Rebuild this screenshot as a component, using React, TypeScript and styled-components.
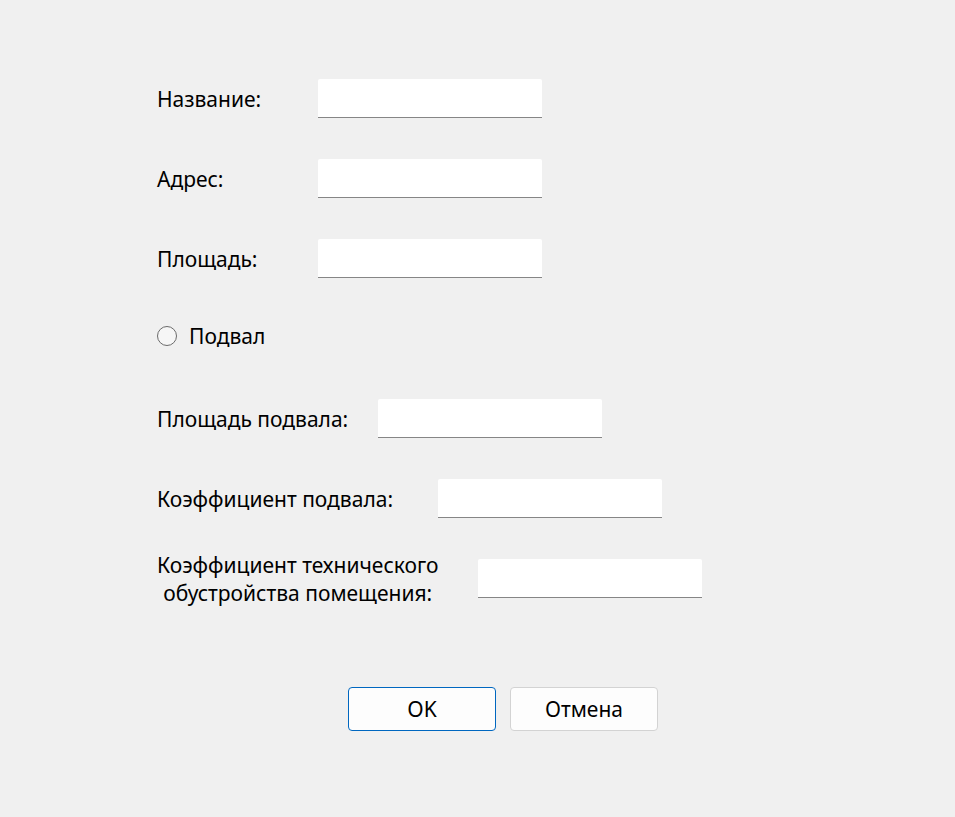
import React from "react";
import styled, { createGlobalStyle } from "styled-components";

const Global = createGlobalStyle`
  html, body { margin: 0; padding: 0; background: #f0f0f0; }
  body { font-family: "Noto Sans", "Open Sans", sans-serif; color: #000; }
`;

const Window = styled.div`
  width: 955px;
  height: 817px;
  box-sizing: border-box;
  padding: 78px 0 0 157px;
  background: #f0f0f0;
  display: flex;
  flex-direction: column;
`;

const Form = styled.div`
  display: flex;
  flex-direction: column;
  gap: 40px;
`;

const Row = styled.div<{ $shift?: number }>`
  display: flex;
  align-items: center;
  height: 40px;
  margin-top: ${(p) => p.$shift ?? 0}px;
  margin-bottom: ${(p) => -(p.$shift ?? 0)}px;
`;

const Label = styled.div<{ $w: number }>`
  width: ${(p) => p.$w}px;
  flex: none;
  font-size: 21px;
  line-height: 28px;
  padding-top: 2px;
`;

const LabelText = styled.span`
  display: inline-block;
  text-align: center;
`;

const Input = styled.input`
  width: 224px;
  height: 39px;
  box-sizing: border-box;
  border: none;
  border-bottom: 1px solid #868686;
  border-radius: 2px 2px 0 0;
  background: #fff;
  outline: none;
  padding: 0 8px;
  font: inherit;
  font-size: 18px;
`;

const RadioCircle = styled.span`
  width: 20px;
  height: 20px;
  box-sizing: border-box;
  border: 1px solid #6b6b6b;
  border-radius: 50%;
  background: #f6f6f6;
  flex: none;
`;

const RadioLabel = styled.label`
  display: flex;
  align-items: center;
  gap: 12px;
  font-size: 21px;
`;

const Buttons = styled.div`
  display: flex;
  gap: 14px;
  margin-top: 89px;
  padding-left: 191px;
`;

const Button = styled.button<{ $primary?: boolean }>`
  width: 148px;
  height: 44px;
  box-sizing: border-box;
  border-radius: 4px;
  border: 1px solid ${(p) => (p.$primary ? "#0067c0" : "#d3d3d3")};
  background: #fdfdfd;
  font-family: inherit;
  font-size: 21px;
  color: #000;
  padding: 0;
`;

const fields = [
  { label: "Название:", w: 161 },
  { label: "Адрес:", w: 161 },
  { label: "Площадь:", w: 161 },
];

const fields2 = [
  { label: "Площадь подвала:", w: 221 },
  { label: "Коэффициент подвала:", w: 281 },
];

export default function App() {
  return (
    <>
      <Global />
      <Window>
        <Form>
          {fields.map((f) => (
            <Row key={f.label}>
              <Label $w={f.w}>{f.label}</Label>
              <Input />
            </Row>
          ))}
          <Row $shift={-2}>
            <RadioLabel>
              <RadioCircle />
              Подвал
            </RadioLabel>
          </Row>
          {fields2.map((f) => (
            <Row key={f.label}>
              <Label $w={f.w}>{f.label}</Label>
              <Input />
            </Row>
          ))}
          <Row>
            <Label $w={321}>
              <LabelText>
                Коэффициент технического
                <br />
                обустройства помещения:
              </LabelText>
            </Label>
            <Input />
          </Row>
        </Form>
        <Buttons>
          <Button $primary>OK</Button>
          <Button>Отмена</Button>
        </Buttons>
      </Window>
    </>
  );
}
